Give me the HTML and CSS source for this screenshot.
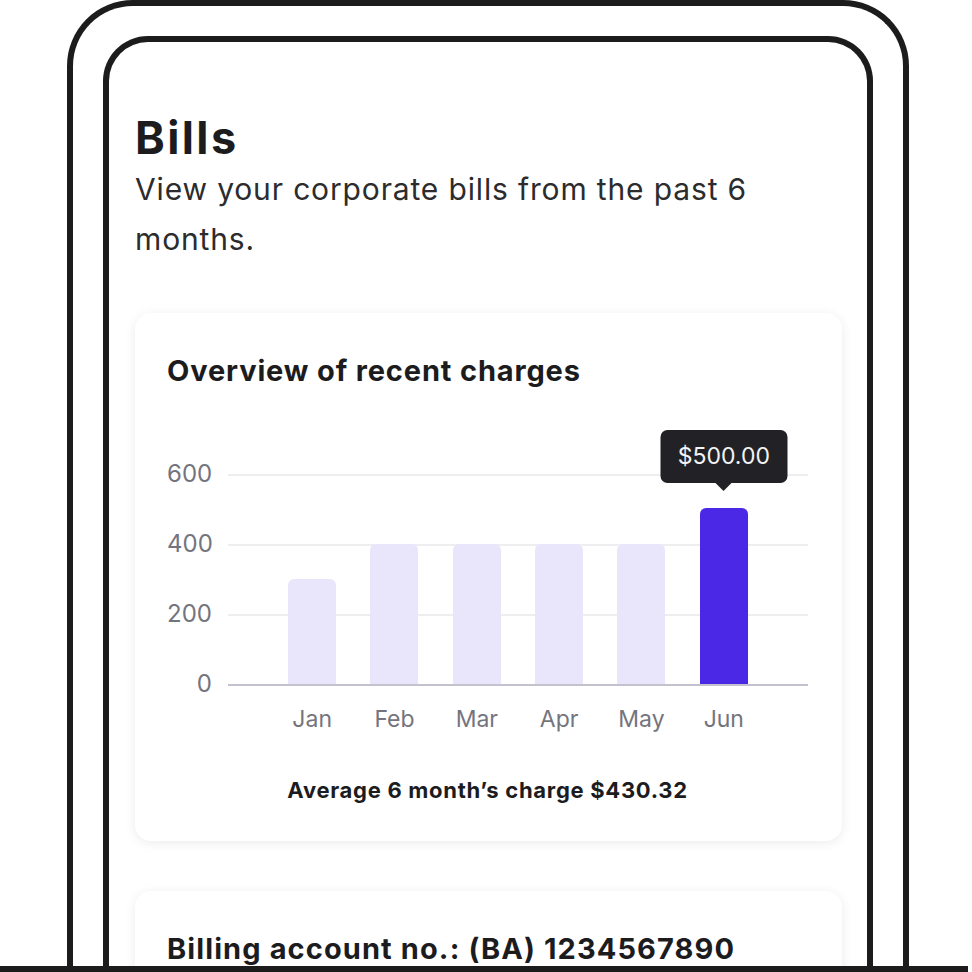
FILE: index.html
```html
<!DOCTYPE html>
<html lang="en">
<head>
<meta charset="utf-8">
<title>Bills</title>
<link rel="stylesheet" href="styles.css">
</head>
<body>
<div class="viewport">
  <div class="device">
    <div class="screen">
      <h1 class="page-title">Bills</h1>
      <p class="page-sub">View your corporate bills from the past 6 months.</p>

      <section class="card">
        <h2 class="card-title">Overview of recent charges</h2>
        <div class="chart">
          <div class="yaxis">
            <span>600</span>
            <span>400</span>
            <span>200</span>
            <span>0</span>
          </div>
          <div class="plot">
            <div class="lines">
              <div class="line"></div>
              <div class="line"></div>
              <div class="line"></div>
              <div class="line base"></div>
            </div>
            <div class="bars">
              <div class="col"><div class="bar" style="height:105px"></div></div>
              <div class="col"><div class="bar" style="height:140px"></div></div>
              <div class="col"><div class="bar" style="height:140px"></div></div>
              <div class="col"><div class="bar" style="height:140px"></div></div>
              <div class="col"><div class="bar" style="height:140px"></div></div>
              <div class="col"><div class="bar active" style="height:176px"><div class="tooltip">$500.00</div></div></div>
            </div>
          </div>
          <div class="months">
            <span>Jan</span><span>Feb</span><span>Mar</span><span>Apr</span><span>May</span><span>Jun</span>
          </div>
        </div>
        <p class="avg">Average 6 month’s charge $430.32</p>
      </section>

      <section class="card">
        <h2 class="card-title account">Billing account no.: (BA) 1234567890</h2>
      </section>
    </div>
  </div>
</div>
</body>
</html>
```

FILE: styles.css
```css
html, body {
  margin: 0;
  padding: 0;
  background: #ffffff;
}
body {
  font-family: Inter, Roboto, "Liberation Sans", Arial, sans-serif;
  overflow: hidden;
  height: 972px;
}
.viewport {
  width: 968px;
  height: 966px;
  overflow: hidden;
  border-bottom: 6px solid #1c1c1c;
}
.device {
  margin-left: 67px;
  width: 770px;
  min-height: 1200px;
  border: 6px solid #1c1c1c;
  border-bottom: none;
  border-radius: 66px 66px 0 0;
  padding: 30px 30px 0 30px;
}
.screen {
  box-sizing: border-box;
  width: 770px;
  min-height: 1100px;
  border: 6px solid #1c1c1c;
  border-bottom: none;
  border-radius: 45px 45px 0 0;
  padding: 70px 25px 0 26px;
}
.page-title {
  margin: 0;
  font-size: 45px;
  line-height: 52px;
  font-weight: 700;
  letter-spacing: 2.4px;
  color: #1c1c1e;
}
.page-sub {
  margin: 0 0 49px 0;
  font-size: 30px;
  line-height: 50px;
  font-weight: 400;
  letter-spacing: 0.85px;
  color: #2c2c2e;
}
.card {
  background: #ffffff;
  border-radius: 16px;
  box-shadow: 0 2px 12px rgba(0, 0, 0, 0.08);
  padding: 40px 34px 37px 32px;
  margin-bottom: 50px;
}
.card-title {
  margin: 0;
  font-size: 29px;
  line-height: 36px;
  font-weight: 700;
  letter-spacing: 0.85px;
  color: #1c1c1e;
}
.card-title.account {
  letter-spacing: 1.1px;
}
.chart {
  margin-top: 73px;
  display: grid;
  grid-template-columns: 45px 1fr;
  column-gap: 16px;
}
.yaxis {
  height: 234px;
  display: flex;
  flex-direction: column;
  justify-content: space-between;
  text-align: right;
  font-size: 24px;
  line-height: 24px;
  color: #74747e;
}
.plot {
  margin-top: 12px;
  height: 212px;
  display: grid;
}
.lines, .bars {
  grid-area: 1 / 1;
}
.lines {
  display: flex;
  flex-direction: column;
  justify-content: space-between;
}
.line {
  height: 2px;
  background: #eeeef1;
}
.line.base {
  background: #c4c2cf;
}
.bars {
  display: flex;
  align-items: flex-end;
  padding: 0 43px 2px 43px;
}
.col {
  flex: 1;
  display: flex;
  justify-content: center;
  align-items: flex-end;
}
.bar {
  width: 48px;
  background: #e9e6fb;
  border-radius: 6px 6px 0 0;
  position: relative;
}
.bar.active {
  background: #4a28e6;
}
.tooltip {
  position: absolute;
  left: 50%;
  bottom: calc(100% + 25px);
  transform: translateX(-50%);
  width: 127px;
  height: 53px;
  box-sizing: border-box;
  background: #222226;
  border-radius: 7px;
  color: #f3f3f5;
  font-size: 23px;
  line-height: 53px;
  text-align: center;
}
.tooltip::after {
  content: "";
  position: absolute;
  left: 50%;
  top: 100%;
  margin-left: -8px;
  border-left: 8px solid transparent;
  border-right: 8px solid transparent;
  border-top: 8px solid #222226;
}
.months {
  grid-column: 2;
  display: flex;
  padding: 0 43px;
  margin-top: 9px;
  font-size: 23px;
  line-height: 28px;
  color: #74747e;
}
.months span {
  flex: 1;
  text-align: center;
}
.avg {
  margin: 43px 0 0 0;
  text-align: center;
  font-size: 22px;
  line-height: 28px;
  font-weight: 700;
  letter-spacing: 0.7px;
  color: #1c1c1e;
}
```
